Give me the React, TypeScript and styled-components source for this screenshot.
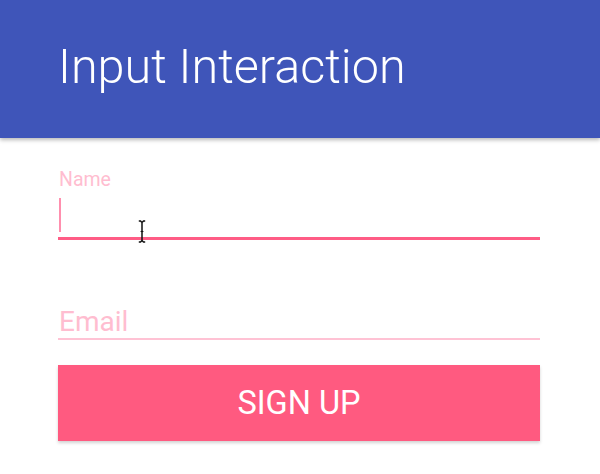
import React from "react";
import styled, { createGlobalStyle } from "styled-components";

const Global = createGlobalStyle`
  html, body { margin: 0; padding: 0; background: #fff; }
  body { font-family: Roboto, "Noto Sans", sans-serif; }
`;

const Page = styled.div`
  width: 600px;
  height: 474px;
  overflow: hidden;
  background: #fff;
`;

const Header = styled.header`
  height: 138px;
  background: #3f55b9;
  box-shadow: 0 2px 4px rgba(0, 0, 0, 0.28);
  display: flex;
  align-items: center;
  padding-left: 58px;
  position: relative;
  z-index: 1;
`;

const Title = styled.h1`
  margin: 0;
  color: #fff;
  font-family: Roboto, sans-serif;
  font-weight: 300;
  font-size: 48.5px;
  line-height: 1;
  padding-bottom: 4px;
`;

const Form = styled.form`
  display: flex;
  flex-direction: column;
  padding: 32px 60px 0 58px;
`;

const Field = styled.div`
  position: relative;
  display: flex;
  flex-direction: column;
`;

const Label = styled.label<{ $floating?: boolean }>`
  font-family: Roboto, sans-serif;
  color: #ffbdd0;
  font-size: ${(p) => (p.$floating ? 19.5 : 28)}px;
  line-height: 1;
  padding-left: 1px;
`;

const InputRow = styled.div<{ $height: number }>`
  height: ${(p) => p.$height}px;
  display: flex;
  align-items: flex-start;
`;

const Caret = styled.span`
  width: 2px;
  height: 34px;
  margin-top: 8px;
  background: #ff8fae;
  margin-left: 1px;
`;

const Underline = styled.div<{ $active?: boolean }>`
  height: ${(p) => (p.$active ? 3 : 2)}px;
  background: ${(p) => (p.$active ? "#ff5c85" : "#ffc2d4")};
`;

const Gap = styled.div<{ $h: number }>`
  height: ${(p) => p.$h}px;
`;

const Button = styled.button`
  margin-top: 25px;
  height: 76px;
  border: none;
  background: #ff5a80;
  color: #fff;
  font-family: Roboto, sans-serif;
  font-size: 32.5px;
  font-weight: 400;
  box-shadow: 0 2px 3px rgba(0, 0, 0, 0.18);
  padding: 0;
`;

const Pointer = styled.svg`
  position: absolute;
  left: 80px;
  top: 50px;
`;

export default function App() {
  return (
    <Page>
      <Global />
      <Header>
        <Title>Input Interaction</Title>
      </Header>
      <Form onSubmit={(e) => e.preventDefault()}>
        <Field>
          <Label $floating>Name</Label>
          <InputRow $height={47}>
            <Caret />
          </InputRow>
          <Underline $active />
          <Pointer width="8" height="23" viewBox="0 0 8 23">
            <path
              d="M0.8 1 H2.5 L4 2.5 L5.5 1 H7.2 M4 2.5 V20.5 M0.8 22 H2.5 L4 20.5 L5.5 22 H7.2"
              fill="none"
              stroke="#111"
              strokeWidth="1.5"
            />
            <path d="M2.6 11.5 H5.4" stroke="#111" strokeWidth="1.1" />
          </Pointer>
        </Field>
        <Gap $h={68} />
        <Field>
          <Label>Email</Label>
          <InputRow $height={2} />
          <Underline />
        </Field>
        <Button type="button">SIGN UP</Button>
      </Form>
    </Page>
  );
}
